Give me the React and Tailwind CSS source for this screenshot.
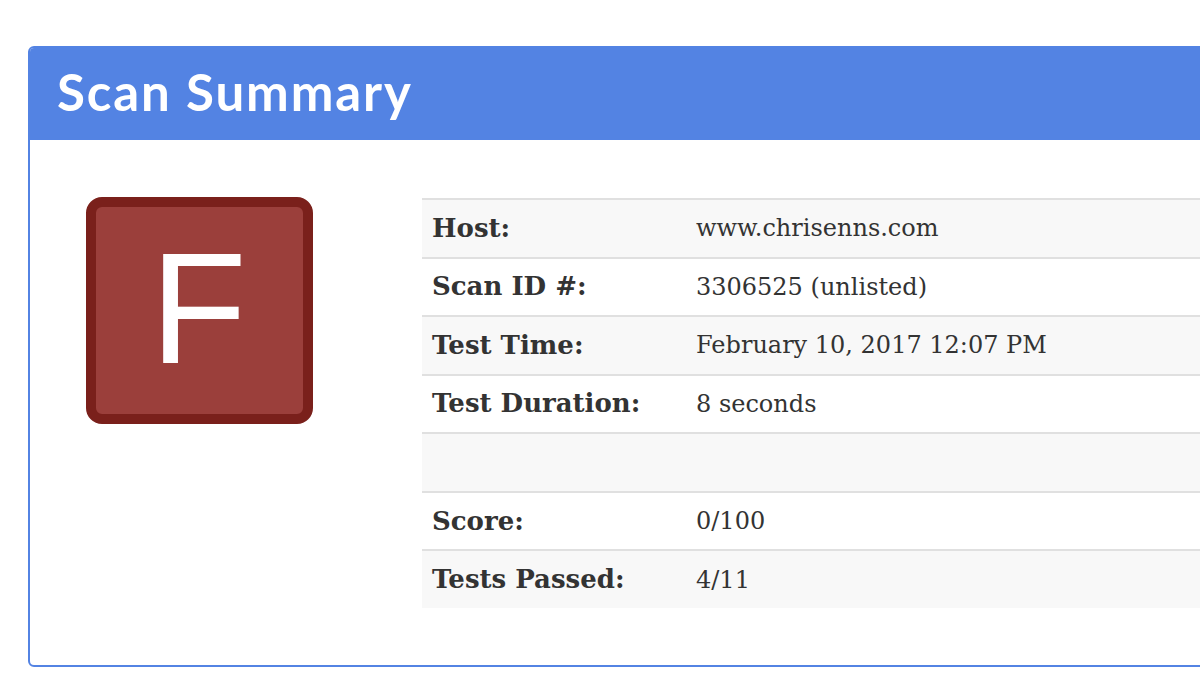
export default function App() {
  const rows = [
    { k: "Host:", v: "www.chrisenns.com" },
    { k: "Scan ID #:", v: "3306525 (unlisted)" },
    { k: "Test Time:", v: "February 10, 2017 12:07 PM" },
    { k: "Test Duration:", v: "8 seconds" },
    { k: "", v: "" },
    { k: "Score:", v: "0/100" },
    { k: "Tests Passed:", v: "4/11" },
  ];
  return (
    <div className="w-[1200px] h-[697px] overflow-hidden bg-white">
      <div className="ml-[28px] mt-[46px] w-[1300px] rounded-[6px] border-2 border-[#5383e3] overflow-hidden">
        <div className="bg-[#5383e3] h-[92px] flex items-center pl-[27px]">
          <h1
            className="text-white text-[51px] font-bold tracking-[1.9px] leading-none pb-[6px]"
            style={{ fontFamily: "Lato, 'Open Sans', sans-serif" }}
          >
            Scan Summary
          </h1>
        </div>
        <div className="flex pt-[57px] pb-[57px] pl-[56px]">
          <div className="w-[227px] h-[227px] shrink-0 rounded-[16px] border-[10px] border-[#7a201b] bg-[#9b3f3b] flex items-center justify-center">
            <span
              className="text-white text-[158px] leading-none pr-[2px] pb-[6px]"
              style={{ fontFamily: "'Liberation Sans', Arial, sans-serif" }}
            >
              F
            </span>
          </div>
          <div className="ml-[109px] mt-[1px] flex-1 text-[#333]" style={{ fontFamily: "'DejaVu Serif', Georgia, serif" }}>
            {rows.map((r, i) => (
              <div
                key={i}
                className={`flex items-center h-[58.57px] border-t-2 border-[#e0e0e0] ${i % 2 === 0 ? "bg-[#f8f8f8]" : "bg-white"}`}
              >
                <div className="w-[274px] pl-[10px] text-[26px] font-bold">{r.k}</div>
                <div className="text-[24px]">{r.v}</div>
              </div>
            ))}
          </div>
        </div>
      </div>
    </div>
  );
}
